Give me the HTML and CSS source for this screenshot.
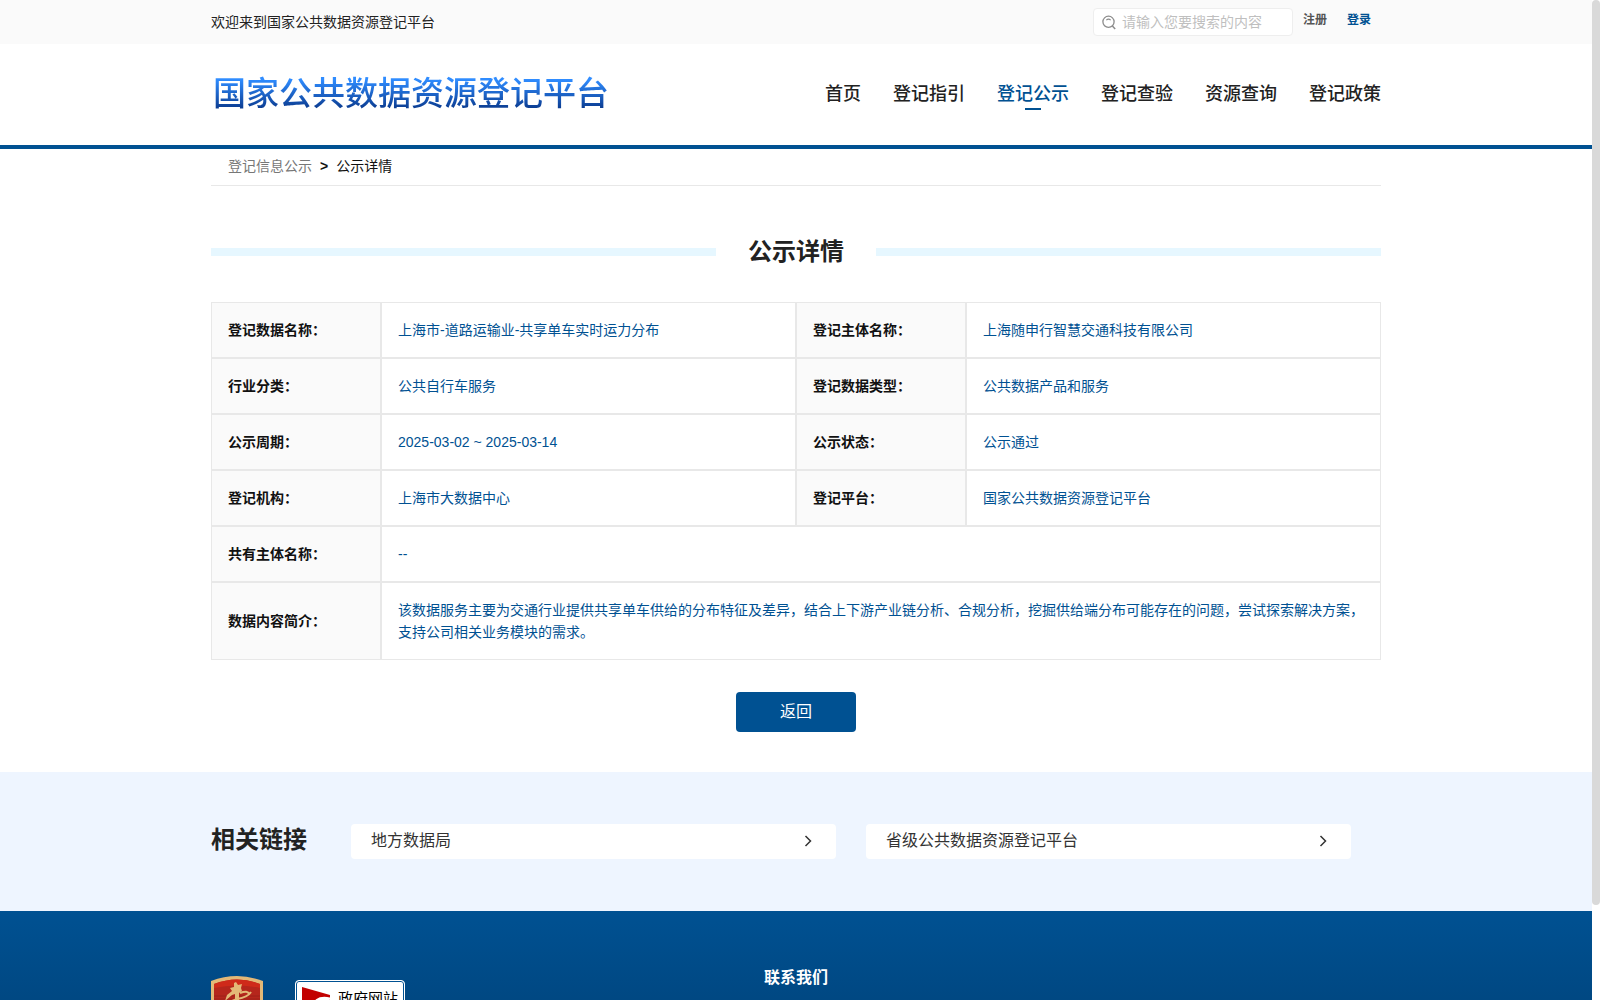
FILE: index.html
```
<!DOCTYPE html>
<html lang="zh-CN">
<head>
  <meta charset="UTF-8">
  <meta name="viewport" content="width=device-width, initial-scale=1.0">
  <title>国家公共数据资源登记平台</title>
  <link rel="stylesheet" href="styles.css">
</head>
<body>

<div class="top-bar">
  <div class="container top-inner">
    <span class="welcome">欢迎来到国家公共数据资源登记平台</span>
    <form class="search">
      <svg class="search-icon" width="14" height="15" viewBox="0 0 14 15" fill="none" stroke="#8c8c8c">
        <circle cx="6.5" cy="6.8" r="5.6" stroke-width="1.3"/>
        <path d="M4.3 5.2Q6.5 3.2 8.7 5.2" stroke-width="1.1"/>
        <path d="M10.4 11l2.8 3" stroke-width="1.5"/>
      </svg>
      <input type="text" class="search-input" aria-label="搜索" placeholder="请输入您要搜索的内容">
    </form>
    <a href="#" class="user-link">注册</a>
    <a href="#" class="user-link login">登录</a>
  </div>
</div>

<header class="header">
  <div class="container header-inner">
    <a href="#" class="logo">国家公共数据资源登记平台</a>
    <nav class="nav">
      <a href="#">首页</a>
      <a href="#">登记指引</a>
      <a href="#" class="active">登记公示</a>
      <a href="#">登记查验</a>
      <a href="#">资源查询</a>
      <a href="#">登记政策</a>
    </nav>
  </div>
</header>

<main class="container">
  <div class="breadcrumb">
    <a href="#">登记信息公示</a>
    <b>&gt;</b>
    <span>公示详情</span>
  </div>

  <h1 class="page-title">公示详情</h1>

  <table class="detail">
    <colgroup>
      <col class="col-label">
      <col>
      <col class="col-label">
      <col>
    </colgroup>
    <tr>
      <th>登记数据名称：</th>
      <td>上海市-道路运输业-共享单车实时运力分布</td>
      <th>登记主体名称：</th>
      <td>上海随申行智慧交通科技有限公司</td>
    </tr>
    <tr>
      <th>行业分类：</th>
      <td>公共自行车服务</td>
      <th>登记数据类型：</th>
      <td>公共数据产品和服务</td>
    </tr>
    <tr>
      <th>公示周期：</th>
      <td>2025-03-02 ~ 2025-03-14</td>
      <th>公示状态：</th>
      <td>公示通过</td>
    </tr>
    <tr>
      <th>登记机构：</th>
      <td>上海市大数据中心</td>
      <th>登记平台：</th>
      <td>国家公共数据资源登记平台</td>
    </tr>
    <tr>
      <th>共有主体名称：</th>
      <td colspan="3">--</td>
    </tr>
    <tr>
      <th>数据内容简介：</th>
      <td colspan="3">该数据服务主要为交通行业提供共享单车供给的分布特征及差异，结合上下游产业链分析、合规分析，挖掘供给端分布可能存在的问题，尝试探索解决方案，支持公司相关业务模块的需求。</td>
    </tr>
  </table>

  <button type="button" class="back-btn">返回</button>
</main>

<section class="related">
  <div class="container related-inner">
    <h2>相关链接</h2>
    <a href="#" class="related-link">
      地方数据局
      <svg width="8" height="12" viewBox="0 0 8 12" fill="none" stroke="#333" stroke-width="1.5"><path d="M1.5 1l5 5-5 5"/></svg>
    </a>
    <a href="#" class="related-link">
      省级公共数据资源登记平台
      <svg width="8" height="12" viewBox="0 0 8 12" fill="none" stroke="#333" stroke-width="1.5"><path d="M1.5 1l5 5-5 5"/></svg>
    </a>
  </div>
</section>

<footer class="footer">
  <div class="container footer-inner">
    <div class="badges">
      <svg class="emblem" width="52" height="60" viewBox="0 0 52 60">
        <path d="M0 5Q26-5 52 5V38Q50 50 26 59Q2 50 0 38Z" fill="#e3b877"/>
        <path d="M3 8Q26-1 49 8V37Q48 48 26 56Q4 48 3 37Z" fill="#b5261c"/>
        <path d="M3 8Q26-1 49 8V12Q26 7 3 12Z" fill="#cf2a1a"/>
        <path d="M3 20h46M3 23h46" stroke="#9c2018"/>
        <path d="M23 7l2-1 2 3 4-1-1 4 1 3-3 2v17h-4V18l-3 1-7 6 2-6 5-4-2-3 4-1z" fill="#e3b877"/>
        <path d="M40 16Q37 21 26 23Q15 26 16 33M29 17q8-3 9 1" fill="none" stroke="#e3b877" stroke-width="2"/>
      </svg>
      <div class="gov-badge">
        <svg width="28" height="44" viewBox="0 0 28 44">
          <path d="M0 0L28 8V38L0 44Z" fill="#c20000"/>
          <path d="M28 12Q14 9 11 20Q10 30 20 31M28 17Q18 15 17 22" fill="none" stroke="#fff" stroke-width="3"/>
        </svg>
        <span>政府网站</span>
      </div>
    </div>
    <h3 class="contact">联系我们</h3>
  </div>
</footer>

<div class="scroll-track"><div class="scroll-thumb"></div></div>

</body>
</html>
```
FILE: styles.css
```
* {
  box-sizing: border-box;
}

::-webkit-scrollbar {
  display: none;
}

body {
  margin: 0;
  padding-right: 8px;
  background-color: #fff;
  color: #222;
  font-family: "Liberation Sans", "Noto Sans CJK SC", sans-serif;
  font-size: 14px;
  line-height: 22px;
}

a {
  color: inherit;
  text-decoration: none;
}

.container {
  max-width: 1170px;
  margin: 0 auto;
}

/* top bar */
.top-bar {
  background-color: #fafafa;
}

.top-inner {
  display: flex;
  align-items: center;
  height: 44px;
  padding-right: 10px;
}

.welcome {
  flex: 1;
}

.search {
  display: flex;
  align-items: center;
  gap: 6px;
  width: 200px;
  height: 28px;
  padding: 0 8px;
  margin-right: 10px;
  background-color: #fff;
  border: 1px solid #eee;
  border-radius: 4px;
}

.search-input {
  flex: 1;
  min-width: 0;
  padding: 0;
  border: none;
  outline: none;
  background: none;
  font: inherit;
}

.search-input::placeholder {
  color: #bfbfbf;
}

.user-link {
  padding-bottom: 4px;
  color: #555;
  font-size: 12px;
  font-weight: bold;
}

.login {
  margin-left: 20px;
  color: #005192;
}

/* header */
.header {
  border-bottom: 4px solid #005192;
}

.header-inner {
  display: flex;
  align-items: center;
  justify-content: space-between;
  height: 101px;
  padding-bottom: 2px;
}

.logo {
  padding-left: 2px;
  background: linear-gradient(#2f8cff 20%, #0b3c91 80%);
  -webkit-background-clip: text;
  background-clip: text;
  color: transparent;
  font-size: 33px;
  font-weight: 500;
  line-height: 48px;
}

.nav {
  display: flex;
  gap: 32px;
  font-size: 18px;
  font-weight: 500;
  line-height: 32px;
}

.nav .active {
  position: relative;
  color: #005192;
}

.nav .active::after {
  content: "";
  position: absolute;
  left: 50%;
  bottom: 0;
  width: 16px;
  height: 2px;
  margin-left: -8px;
  background-color: #005192;
}

/* detail */
.breadcrumb {
  display: flex;
  gap: 8px;
  padding: 6px 17px 8px;
  border-bottom: 1px solid #e8e8e8;
  color: #111;
}

.breadcrumb a {
  color: #777;
}

.page-title {
  display: flex;
  align-items: center;
  gap: 32px;
  margin: 50px 0 34px;
  font-size: 24px;
  font-weight: bold;
  line-height: 32px;
}

.page-title::before,
.page-title::after {
  content: "";
  flex: 1;
  height: 8px;
  background-color: #e6f7ff;
}

.detail {
  width: 100%;
  table-layout: fixed;
  border: none;
  border-collapse: separate;
  border-spacing: 0;
}

.col-label {
  width: 170px;
}

.detail th,
.detail td {
  padding: 16px;
  border: 1px solid #e8e8e8;
  text-align: left;
}

.detail th {
  background-color: #fafafa;
  color: #111;
}

.detail td {
  color: #005192;
}

.back-btn {
  display: block;
  width: 120px;
  height: 40px;
  margin: 32px auto 40px;
  padding: 0 0 4px;
  border: none;
  border-radius: 4px;
  background-color: #005192;
  color: #fff;
  font-family: inherit;
  font-size: 16px;
  cursor: pointer;
}

/* related links */
.related {
  background-color: #eef5ff;
}

.related-inner {
  display: flex;
  align-items: center;
  gap: 30px;
  height: 139px;
  padding-right: 30px;
}

.related h2 {
  margin: 0 14px 0 0;
  padding-bottom: 4px;
  font-size: 24px;
  line-height: 32px;
}

.related-link {
  flex: 1;
  display: flex;
  align-items: center;
  justify-content: space-between;
  height: 35px;
  padding: 0 24px 2px 20px;
  border-radius: 4px;
  background-color: #fff;
  color: #333;
  font-size: 16px;
}

/* footer */
.footer {
  background: linear-gradient(#005192, #003d70);
}

.footer-inner {
  display: grid;
  grid-template-columns: 1fr auto 1fr;
  align-items: start;
  height: 194px;
  padding-top: 56px;
  color: #fff;
}

.badges {
  display: flex;
  gap: 32px;
  padding-top: 9px;
}

.gov-badge {
  display: flex;
  gap: 8px;
  width: 110px;
  height: 52px;
  margin-top: 4px;
  padding: 6px;
  border: 1px solid #fff;
  border-radius: 4px;
  background-color: #fff;
  box-shadow: inset 0 0 0 1px #005192;
  color: #000;
  font-size: 15px;
  line-height: 24px;
  white-space: nowrap;
}

.contact {
  margin: 0;
  font-size: 16px;
}

/* scrollbar */
.scroll-track {
  position: fixed;
  top: 0;
  right: 0;
  width: 8px;
  height: 100%;
  background-color: #fff;
}

.scroll-thumb {
  height: 90.5%;
  border-radius: 4px;
  background-color: #d9d9d9;
}
```
